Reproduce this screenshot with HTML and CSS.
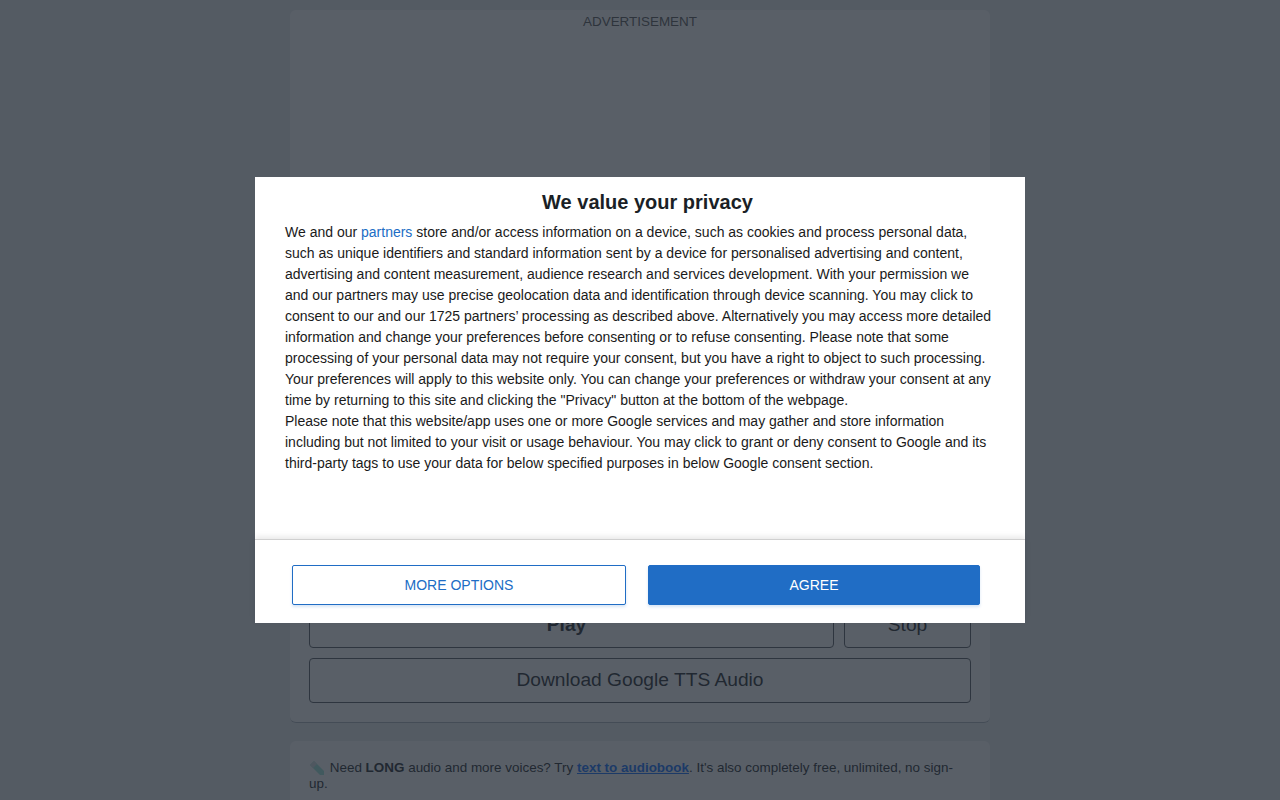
FILE: index.html
```html
<!DOCTYPE html>
<html lang="en">
<head>
    <meta charset="UTF-8">
    <meta name="viewport" content="width=device-width, initial-scale=1.0">
    <title>Google Text to Speech</title>
    <link rel="stylesheet" href="styles.css">
</head>
<body>
    <div class="container">
        <!-- Player card -->
        <div class="card player">
            <div class="ad-label">ADVERTISEMENT</div>
            <div class="ad-slot"></div>
            <div class="btn-row">
                <button class="btn btn-play" type="button">Play</button>
                <button class="btn btn-stop" type="button">Stop</button>
            </div>
            <button class="btn btn-download" type="button">Download Google TTS Audio</button>
        </div>

        <!-- Audiobook hint -->
        <div class="card hint">
            <svg class="hint-icon" width="16" height="16" viewBox="0 0 16 16">
                <path d="M1 5 5 1 15 11 15 15 11 15z" fill="#9fe6da"/>
                <path d="M1 5 5 1 8 4 4 8z" fill="#d8e0e4"/>
            </svg>
            Need <strong>LONG</strong> audio and more voices? Try <a href="#">text to audiobook</a>. It's also completely free, unlimited, no sign-up.
        </div>
    </div>

    <!-- Consent popup -->
    <div class="overlay">
        <div class="consent">
            <div class="consent-body">
                <h1>We value your privacy</h1>
                <p>We and our <a href="#">partners</a> store and/or access information on a device, such as cookies and process personal data, such as unique identifiers and standard information sent by a device for personalised advertising and content, advertising and content measurement, audience research and services development. With your permission we and our partners may use precise geolocation data and identification through device scanning. You may click to consent to our and our 1725 partners’ processing as described above. Alternatively you may access more detailed information and change your preferences before consenting or to refuse consenting. Please note that some processing of your personal data may not require your consent, but you have a right to object to such processing. Your preferences will apply to this website only. You can change your preferences or withdraw your consent at any time by returning to this site and clicking the "Privacy" button at the bottom of the webpage.</p>
                <p>Please note that this website/app uses one or more Google services and may gather and store information including but not limited to your visit or usage behaviour. You may click to grant or deny consent to Google and its third-party tags to use your data for below specified purposes in below Google consent section.</p>
            </div>
            <div class="consent-footer">
                <button class="consent-btn more" type="button">MORE OPTIONS</button>
                <button class="consent-btn agree" type="button">AGREE</button>
            </div>
        </div>
    </div>
</body>
</html>
```

FILE: styles.css
```css
html, body {
    height: 100%;
    overflow: hidden;
}
body {
    font-family: "Liberation Sans", Arial, sans-serif;
    margin: 0;
    background-color: #ebedf0;
    color: #212529;
}
.container {
    width: 700px;
    margin: 0 auto;
    padding-top: 10px;
}
.card {
    background-color: #fff;
    border-radius: 6px;
}
.player {
    padding: 4px 19px 19px;
    border-bottom: 1px solid #adb5bd;
    margin-bottom: 18px;
}
.ad-label {
    font-size: 13.44px;
    line-height: 15px;
    text-align: center;
    color: #555;
}
.ad-slot {
    height: 574px;
}
.btn-row {
    display: flex;
    gap: 10px;
    margin-bottom: 10px;
}
.btn {
    height: 45px;
    padding: 0 0 2px;
    font-family: inherit;
    font-size: 19.2px;
    color: #212529;
    background: transparent;
    border: 1px solid #555a60;
    border-radius: 4px;
}
.btn-play {
    flex: 1;
    padding-right: 10px;
    font-weight: bold;
}
.btn-stop {
    width: 127px;
}
.btn-download {
    display: block;
    width: 100%;
}
.hint {
    padding: 19px;
    font-size: 13.44px;
    line-height: 16px;
    height: 200px;
}
.hint-icon {
    vertical-align: -4px;
    margin-right: 1px;
}
.hint a {
    color: #0d6efd;
    font-weight: bold;
}
.overlay {
    position: fixed;
    top: 0;
    left: 0;
    width: 100%;
    height: 100%;
    background-color: rgba(33, 41, 52, 0.75);
    display: flex;
    justify-content: center;
    align-items: center;
}
.consent {
    width: 770px;
    height: 446px;
    background-color: #fff;
    display: flex;
    flex-direction: column;
}
.consent-body {
    flex: 1;
    padding: 12px 30px 0;
    font-size: 14px;
    line-height: 21px;
    color: #1a1a1a;
}
.consent-body h1 {
    margin: 0 0 7px;
    padding-left: 15px;
    font-size: 20px;
    line-height: 26px;
    text-align: center;
    color: #1a1f26;
}
.consent-body p {
    margin: 0;
}
.consent-body a {
    color: #206dc5;
    text-decoration: none;
}
.consent-footer {
    display: flex;
    gap: 22px;
    padding: 25px 45px 18px 37px;
    border-top: 1px solid #d0d0d0;
    box-shadow: 0 -2px 6px rgba(0, 0, 0, 0.1);
}
.consent-btn {
    height: 40px;
    padding: 0;
    font-family: inherit;
    font-size: 14px;
    border: 1px solid #206dc5;
    border-radius: 2px;
    box-shadow: 0 2px 3px rgba(32, 109, 197, 0.18);
}
.more {
    flex: 0 0 334px;
    color: #206dc5;
    background-color: #fff;
}
.agree {
    flex: 1;
    color: #fff;
    background-color: #206dc5;
}
```
